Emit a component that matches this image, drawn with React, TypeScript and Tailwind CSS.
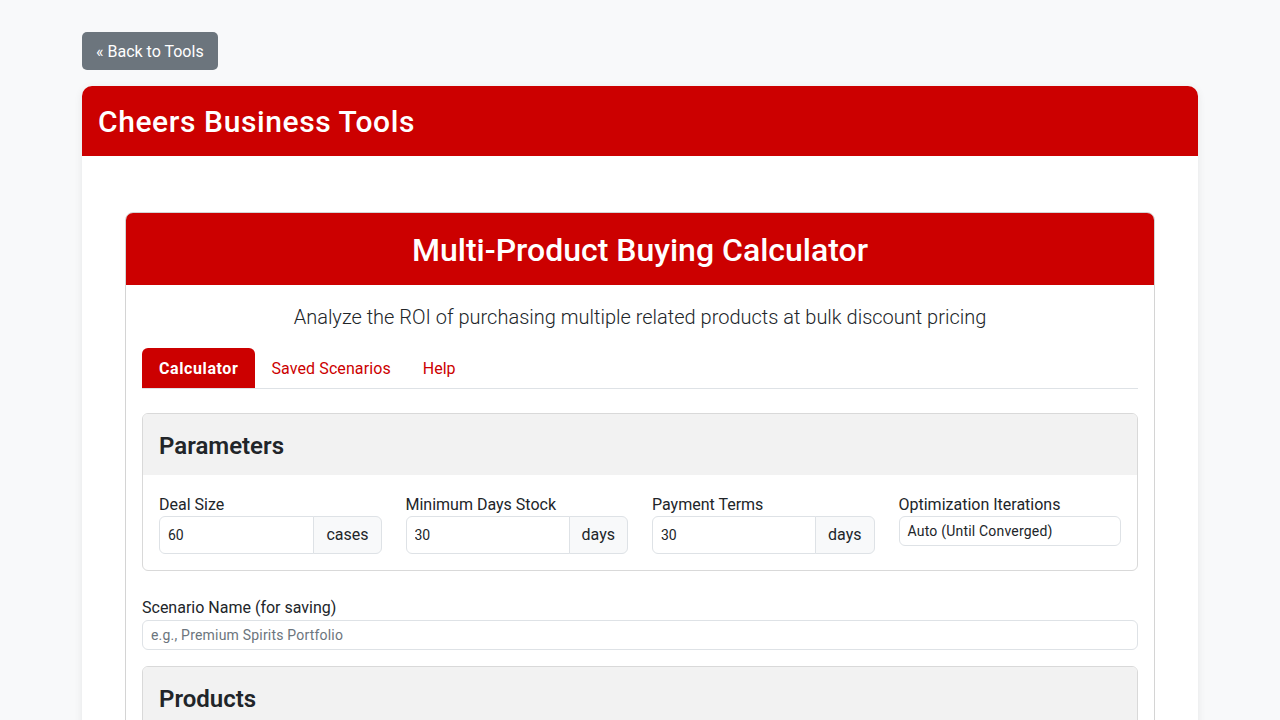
import React from "react";

const RED = "bg-[#cc0000]";

// 1 parameter with unit suffix
function UnitField({ label, value, unit }: { label: string; value: string; unit: string }) {
  return (
    <div className="flex flex-col">
      <label className="pt-px text-base leading-[23px]">{label}</label>
      <div className="flex h-[38px]">
        <input
          defaultValue={value}
          className="min-w-0 flex-1 rounded-l-md border border-[#dee2e6] bg-white px-2 text-sm text-[#212529] outline-none"
        />
        <span className="-ml-px flex items-center rounded-r-md border border-[#dee2e6] bg-[#f8f9fa] px-3 text-base">
          {unit}
        </span>
      </div>
    </div>
  );
}

export default function App() {
  return (
    <div
      className="min-h-screen bg-[#f8f9fa] text-[#212529]"
      style={{ fontFamily: "Roboto, 'Liberation Sans', Arial, sans-serif" }}
    >
      <div className="mx-auto w-[1116px] pt-8">
        <button className="h-[38px] rounded-[5px] bg-[#6c757d] px-[14px] pt-px text-base text-white">
          « Back to Tools
        </button>

        <div className="mt-4 overflow-hidden rounded-[10px] bg-white shadow-[0_2px_8px_rgba(0,0,0,0.08)]">
          <div className={`flex h-[70px] items-center px-4 ${RED}`}>
            <h1 className="text-[30px] font-medium tracking-[0.6px] text-white">Cheers Business Tools</h1>
          </div>

          <div className="px-[43px] pt-[56px]">
            <div className="overflow-hidden rounded-lg border border-[#d4d4d4]">
              <div className={`flex h-[72px] items-center justify-center pt-[2px] ${RED}`}>
                <h2 className="text-[32px] font-medium text-white">Multi-Product Buying Calculator</h2>
              </div>

              <div className="p-4">
                <p className="pt-px text-center text-xl font-light leading-[30px]">
                  Analyze the ROI of purchasing multiple related products at bulk discount pricing
                </p>

                {/* tabs */}
                <div className="mt-4 flex border-b border-[#dee2e6]">
                  <div className={`flex h-10 items-center rounded-t-md px-[17px] pt-px font-bold tracking-[0.6px] text-white ${RED}`}>
                    Calculator
                  </div>
                  <div className="flex h-10 items-center px-4 pt-px tracking-[0.1px] text-[#cc0000]">Saved Scenarios</div>
                  <div className="flex h-10 items-center px-4 pt-px text-[#cc0000]">Help</div>
                </div>

                {/* parameters */}
                <div className="mt-6 overflow-hidden rounded-md border border-[#d9d9d9]">
                  <div className="bg-[#f2f2f2] px-4 pb-[14px] pt-[18px]">
                    <h3 className="text-2xl font-semibold leading-[29px]">Parameters</h3>
                  </div>
                  <div className="grid grid-cols-4 gap-6 px-4 pb-4 pt-[17px]">
                    <UnitField label="Deal Size" value="60" unit="cases" />
                    <UnitField label="Minimum Days Stock" value="30" unit="days" />
                    <UnitField label="Payment Terms" value="30" unit="days" />
                    <div className="flex flex-col">
                      <label className="pt-px text-base leading-[23px]">Optimization Iterations</label>
                      <div className="flex h-[30px] items-center rounded-md border border-[#dee2e6] bg-white px-2 text-sm tracking-[0.2px]">
                        Auto (Until Converged)
                      </div>
                    </div>
                  </div>
                </div>

                <div className="mt-6">
                  <label className="block pt-px text-base leading-6">Scenario Name (for saving)</label>
                  <input
                    placeholder="e.g., Premium Spirits Portfolio"
                    className="h-[30px] w-full rounded-md border border-[#dee2e6] bg-white px-2 text-sm tracking-[0.2px] outline-none placeholder:text-[#6c757d]"
                  />
                </div>

                {/* products */}
                <div className="mt-4 overflow-hidden rounded-md border border-[#d9d9d9]">
                  <div className="bg-[#f2f2f2] px-4 pb-[14px] pt-[18px]">
                    <h3 className="text-2xl font-semibold leading-[29px]">Products</h3>
                  </div>
                  <div className="h-40 p-4" />
                </div>
              </div>
            </div>
          </div>
        </div>
      </div>
    </div>
  );
}
